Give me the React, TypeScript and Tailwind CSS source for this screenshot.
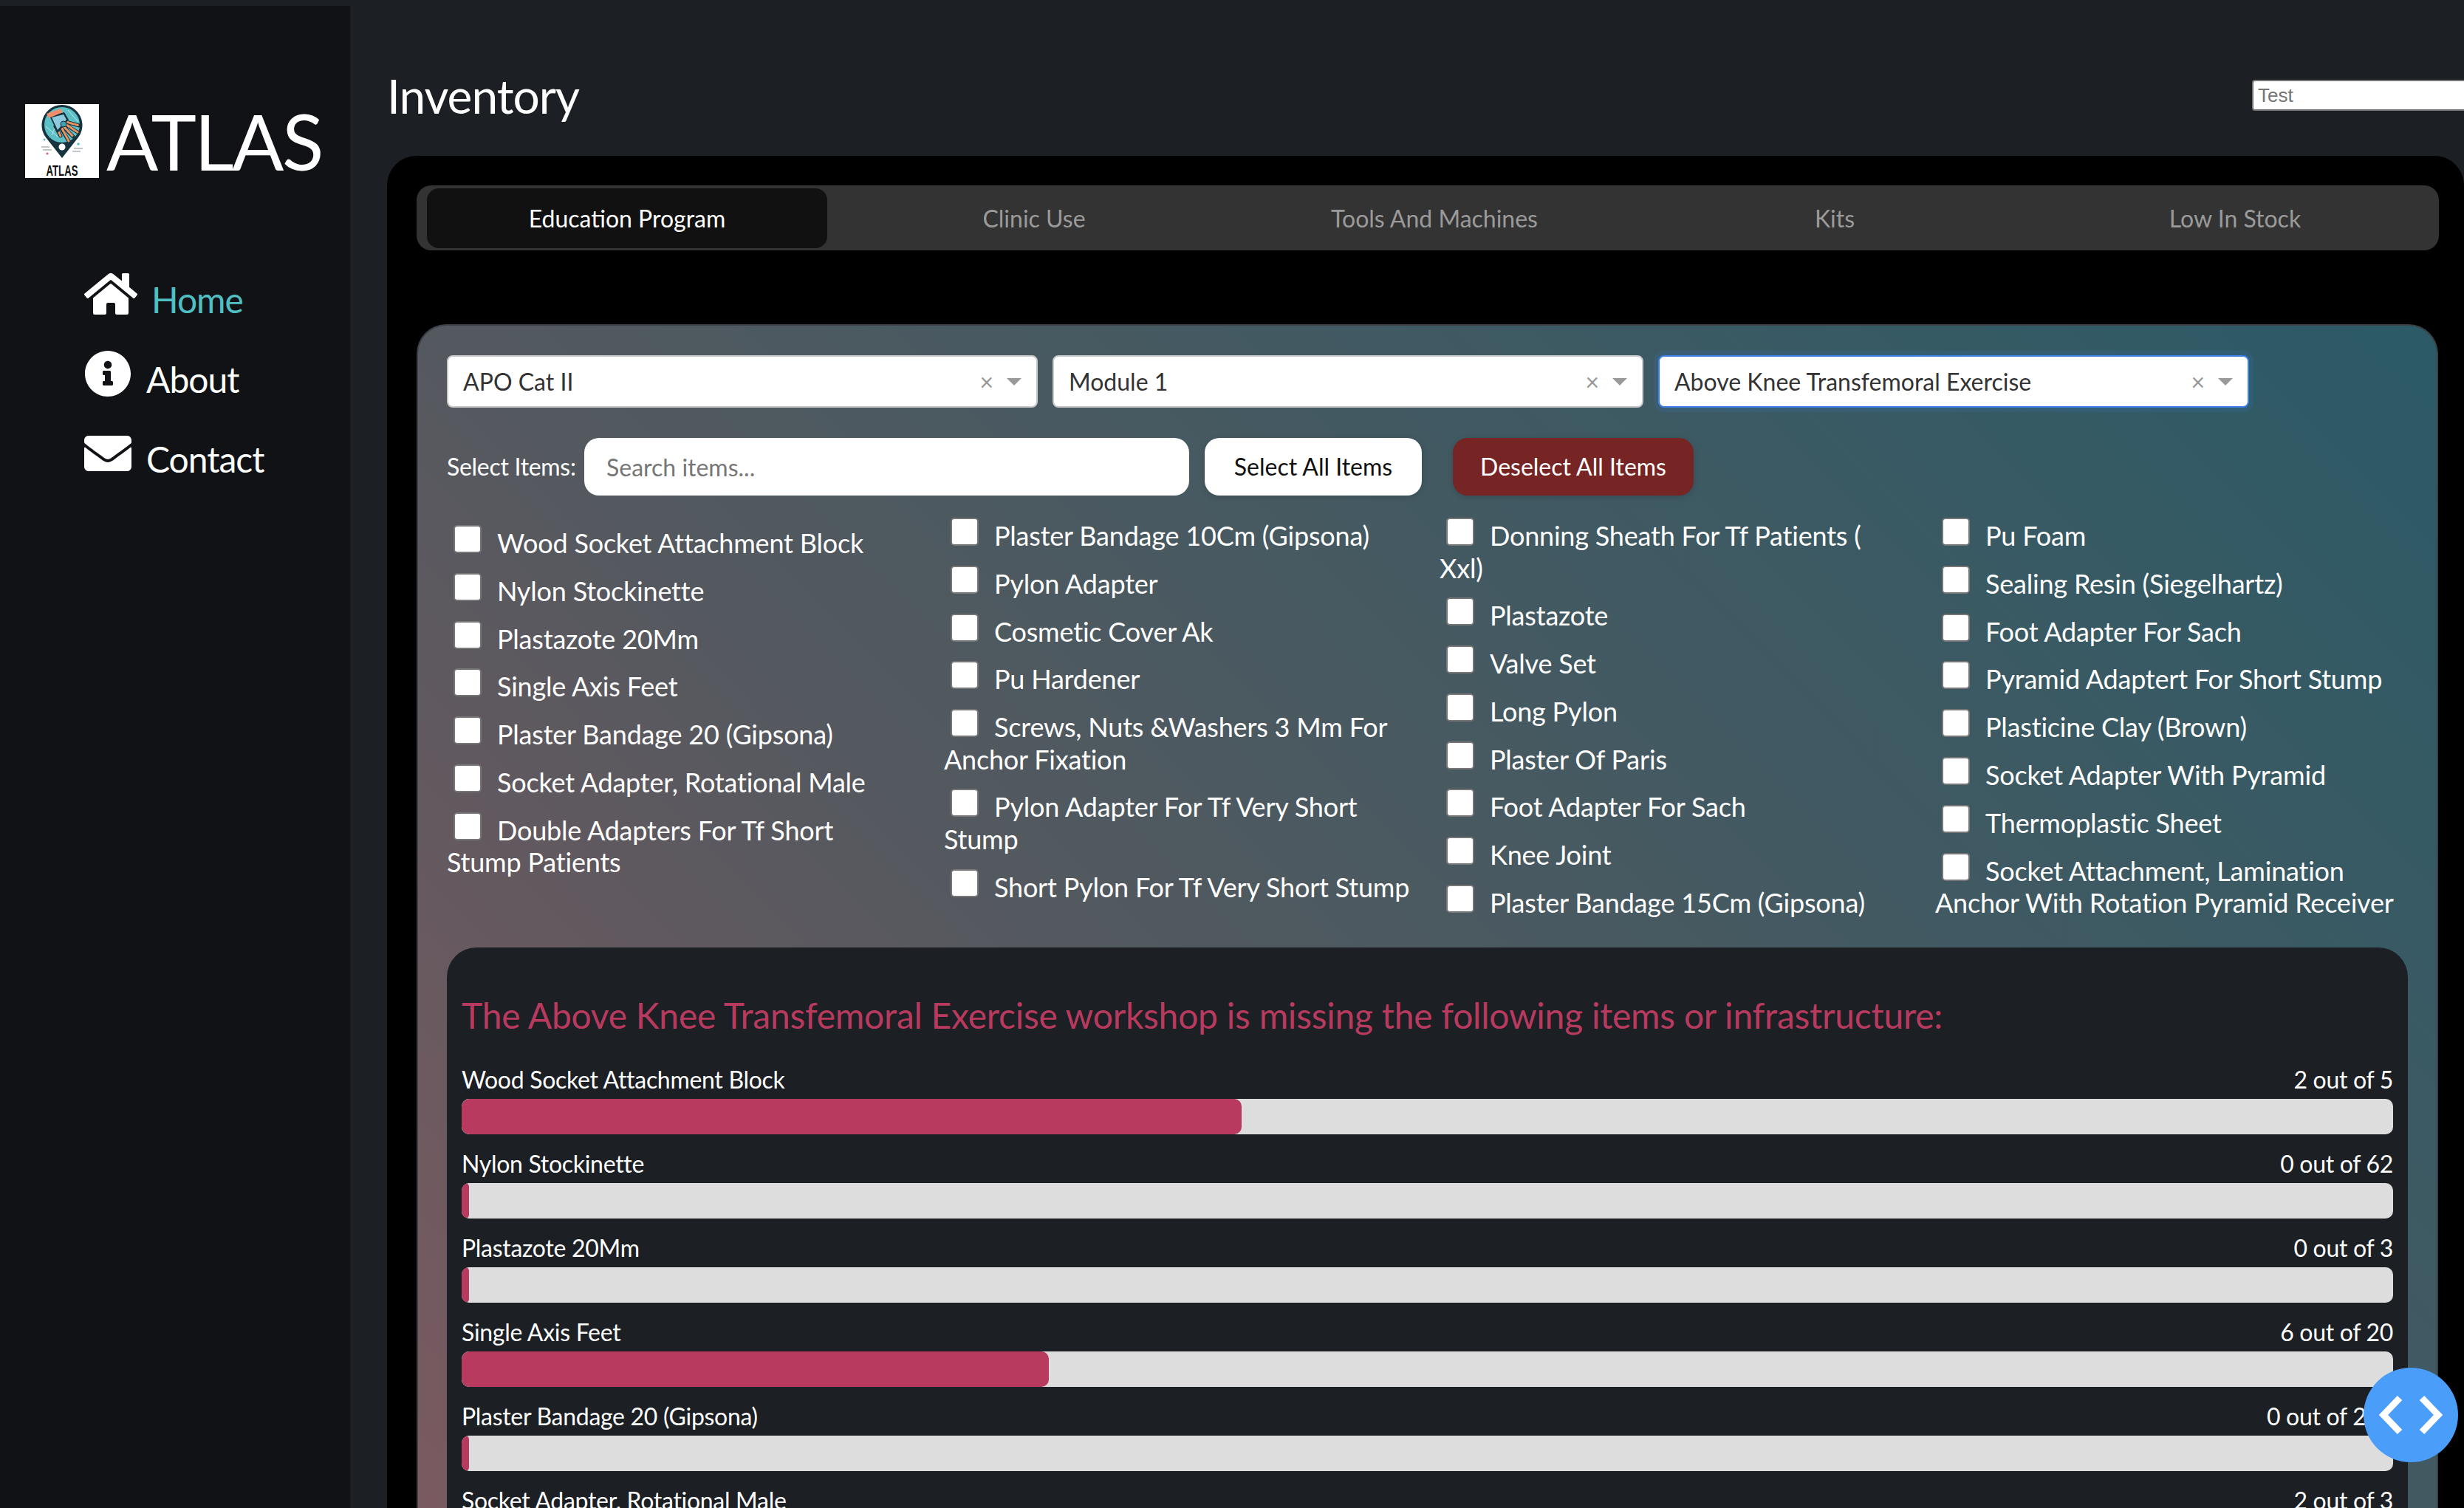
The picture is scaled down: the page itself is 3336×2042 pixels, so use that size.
import { FaEnvelope, FaHome, FaInfoCircle } from 'react-icons/fa'

const TABS = ['Education Program', 'Clinic Use', 'Tools And Machines', 'Kits', 'Low In Stock']

const SELECTS = ['APO Cat II', 'Module 1', 'Above Knee Transfemoral Exercise']

const COLUMNS = [
  [
    'Wood Socket Attachment Block',
    'Nylon Stockinette',
    'Plastazote 20Mm',
    'Single Axis Feet',
    'Plaster Bandage 20 (Gipsona)',
    'Socket Adapter, Rotational Male',
    'Double Adapters For Tf Short\nStump Patients',
  ],
  [
    'Plaster Bandage 10Cm (Gipsona)',
    'Pylon Adapter',
    'Cosmetic Cover Ak',
    'Pu Hardener',
    'Screws, Nuts &Washers 3 Mm For\nAnchor Fixation',
    'Pylon Adapter For Tf Very Short\nStump',
    'Short Pylon For Tf Very Short Stump',
  ],
  [
    'Donning Sheath For Tf Patients (\nXxl)',
    'Plastazote',
    'Valve Set',
    'Long Pylon',
    'Plaster Of Paris',
    'Foot Adapter For Sach',
    'Knee Joint',
    'Plaster Bandage 15Cm (Gipsona)',
  ],
  [
    'Pu Foam',
    'Sealing Resin (Siegelhartz)',
    'Foot Adapter For Sach',
    'Pyramid Adaptert For Short Stump',
    'Plasticine Clay (Brown)',
    'Socket Adapter With Pyramid',
    'Thermoplastic Sheet',
    'Socket Attachment, Lamination\nAnchor With Rotation Pyramid Receiver',
  ],
]

const STOCK = [
  { name: 'Wood Socket Attachment Block', have: 2, need: 5 },
  { name: 'Nylon Stockinette', have: 0, need: 62 },
  { name: 'Plastazote 20Mm', have: 0, need: 3 },
  { name: 'Single Axis Feet', have: 6, need: 20 },
  { name: 'Plaster Bandage 20 (Gipsona)', have: 0, need: 200 },
  { name: 'Socket Adapter, Rotational Male', have: 2, need: 3 },
]

function Logo() {
  return (
    <svg viewBox="0 0 100 100" className="h-[100px] w-[100px] shrink-0 bg-white">
      {/* pin */}
      <path d="M50 73 L28 45 A27.5 27.5 0 1 1 72 45 Z" fill="#16333f" />
      <circle cx="50" cy="28" r="24" fill="#5cc0c6" />
      <g stroke="#e8f6f6" strokeWidth="0.7" fill="none">
        <path d="M28 30 L44 44" />
        <path d="M36 42 L42 28" />
        <path d="M58 8 L72 24" />
      </g>
      {/* fingers */}
      <g stroke="#16333f" strokeWidth="5" strokeLinecap="round">
        <path d="M55 24 L73 29" />
        <path d="M55 28 L71 38" />
        <path d="M52 31 L65 44" />
        <path d="M49 33 L59 50" />
        <path d="M41 30 L48 43" />
      </g>
      <g stroke="#ea9463" strokeWidth="3" strokeLinecap="round" strokeDasharray="4 2">
        <path d="M56 24 L73 29" />
        <path d="M56 28 L71 38" />
        <path d="M53 31 L65 44" />
        <path d="M50 33 L59 50" />
        <path d="M42 31 L48 43" />
      </g>
      {/* back of the hand */}
      <path d="M33 16 L53 11 L59 21 L44 39 Z" fill="#16333f" />
      <path d="M36 18 L52 14 L56 21 L44 35 Z" fill="#8fc9de" />
      <path d="M29 13 L48 6 L51 11 L32 19 Z" fill="#ef8d6d" />
      <circle cx="52" cy="27" r="4" fill="#3f9fb0" stroke="#16333f" strokeWidth="1" />
      <circle cx="50" cy="58" r="4.5" fill="#fff" />
      <g stroke="#9aa3a8" strokeWidth="1.2">
        <path d="M22 58 H33" />
        <path d="M24 62 H36" />
        <path d="M66 60 H78" />
        <path d="M64 64 H75" />
      </g>
      <circle cx="26" cy="48" r="1.5" fill="#5cc0c6" />
      <circle cx="72" cy="54" r="1.8" fill="#5cc0c6" />
      <circle cx="30" cy="67" r="1.5" fill="#e2566c" />
      <text
        x="50"
        y="97"
        textAnchor="middle"
        fontFamily="'Liberation Sans', sans-serif"
        fontWeight="700"
        fontSize="20"
        textLength="43"
        lengthAdjust="spacingAndGlyphs"
        fill="#111"
      >
        ATLAS
      </text>
    </svg>
  )
}

function Sidebar() {
  return (
    <aside className="mt-[8px] h-[2034px] w-[474px] shrink-0 bg-[#101215] pl-[34px] pt-[133px]">
      <div className="flex items-center gap-[10px]">
        <Logo />
        <span className="text-[104px] leading-[100px] tracking-[-2.6px] text-white">ATLAS</span>
      </div>
      <nav className="ml-[80px] mt-[125px] flex flex-col gap-[37px] text-[48px] leading-[62px] tracking-[-1px] text-white">
        <a className="flex items-start gap-[19px]">
          <FaHome className="h-[64px] w-[72px]" />
          <span className="pt-[9px] text-[#4fbfc4]">Home</span>
        </a>
        <a className="flex items-start gap-[20px]">
          <FaInfoCircle className="size-[64px]" />
          <span className="pt-[9px]">About</span>
        </a>
        <a className="flex items-start gap-[20px]">
          <FaEnvelope className="size-[64px]" />
          <span className="pt-[9px]">Contact</span>
        </a>
      </nav>
    </aside>
  )
}

function SelectBox({ label, focused }: { label: string; focused: boolean }) {
  return (
    <div
      className={
        focused
          ? 'flex h-[71px] w-[800px] items-center rounded-[8px] border-2 border-[#3b7ee6] bg-white pl-[20px] pr-[20px] shadow-[0_0_0_6px_rgba(59,126,230,0.12)]'
          : 'flex h-[71px] w-[800px] items-center rounded-[8px] border-2 border-[#c8c8c8] bg-white pl-[20px] pr-[20px]'
      }
    >
      <span className="flex-1 text-[32px] text-[#333]">{label}</span>
      <span className="mr-[18px] text-[32px] leading-none text-[#999]">×</span>
      <span className="h-0 w-0 border-x-[10px] border-t-[10px] border-x-transparent border-t-[#999]" />
    </div>
  )
}

function ItemColumn({ items, first }: { items: string[]; first: boolean }) {
  return (
    <div className={first ? 'w-[673px] shrink-0 pt-[10px]' : 'w-[671px] shrink-0'}>
      {items.map((item) => (
        <label key={item} className="mb-[18.3px] block whitespace-pre text-[36px] leading-[43.5px] tracking-[-0.2px] text-white">
          <input
            type="checkbox"
            className="ml-[9px] mr-[21px] inline-block h-[38px] w-[38px] appearance-none rounded-[5px] border-2 border-[#767676] bg-white"
          />
          {item}
        </label>
      ))}
    </div>
  )
}

function StockRow({ name, have, need }: { name: string; have: number; need: number }) {
  return (
    <div className="mb-[10px]">
      <div className="flex h-[56px] items-end justify-between pb-[6px] text-[32px] leading-[40px] tracking-[-0.3px] text-white">
        <span>{name}</span>
        <span>
          {have} out of {need}
        </span>
      </div>
      <div className="h-[48px] overflow-hidden rounded-[10px] bg-[#dddddd]">
        <div
          className="h-full rounded-[10px] bg-[#b83a5e]"
          style={{ width: `calc(${(have / need) * 100}% + 10px)` }}
        />
      </div>
    </div>
  )
}

export default function App() {
  return (
    <div className="relative flex h-[2042px] w-[3336px] overflow-hidden bg-[#1c1f24] font-['Lato','Noto_Sans',sans-serif] font-normal">
      <Sidebar />
      <main className="flex min-w-0 flex-1 flex-col pl-[50px]">
        <header className="flex h-[211px] shrink-0 items-start">
          <h1 className="mt-[90px] flex-1 text-[64px] leading-[80px] tracking-[-1px] text-white">Inventory</h1>
          <input
            placeholder="Test"
            className="-mr-[33px] mt-[108px] h-[42px] w-[320px] shrink-0 rounded-[4px] border-2 border-[#767676] bg-white pl-[6px] font-['Liberation_Sans',sans-serif] text-[26px] font-normal placeholder:text-[#757575]"
          />
        </header>

        <section className="flex min-h-0 flex-1 flex-col rounded-t-[40px] bg-black pl-[40px] pr-[34px] pt-[40px]">
          <div className="flex h-[88px] shrink-0 items-center rounded-[20px] bg-[#333333] pl-[14px]">
            {TABS.map((tab, i) => (
              <div
                key={tab}
                className={
                  i === 0
                    ? 'mr-[9px] flex h-[81px] w-[542px] items-center justify-center rounded-[16px] bg-[#111111] pt-[1px] text-[32px] text-white'
                    : 'flex h-[81px] w-[542px] items-center justify-center pt-[2px] text-[32px] text-[#9a9a9a]'
                }
              >
                {tab}
              </div>
            ))}
          </div>

          <div className="mr-[1px] mt-[100px] min-h-0 flex-1 overflow-hidden rounded-t-[40px] border-2 border-b-0 border-[#3a4046] bg-[linear-gradient(45deg,#7a5a60,#54595f_37%,#2b5a66)] px-[39px] pt-[40px]">
            <div className="flex gap-[20px]">
              {SELECTS.map((label, i) => (
                <SelectBox key={label} label={label} focused={i === 2} />
              ))}
            </div>

            <div className="mt-[41px] flex h-[78px] items-center">
              <span className="w-[186px] text-[32px] tracking-[-0.3px] text-white">Select Items:</span>
              <input
                placeholder="Search items..."
                className="h-full w-[819px] rounded-[20px] bg-white px-[30px] text-[32px] placeholder:text-[#777]"
              />
              <button className="ml-[21px] h-full w-[294px] rounded-[20px] bg-white text-[32px] text-[#111] shadow-[0_2px_8px_rgba(0,0,0,0.15)]">
                Select All Items
              </button>
              <button className="ml-[42px] h-full w-[326px] rounded-[20px] bg-[#762524] text-[32px] text-white shadow-[0_2px_8px_rgba(0,0,0,0.15)]">
                Deselect All Items
              </button>
            </div>

            <div className="flex h-[612px] pt-[30px]">
              {COLUMNS.map((items, i) => (
                <ItemColumn key={i} items={items} first={i === 0} />
              ))}
            </div>

            <div className="rounded-t-[40px] bg-[#1c1f24] px-[20px] pt-[62px]">
              <h2 className="mb-[27px] text-[48px] leading-[60px] tracking-[-0.25px] text-[#b83a5e]">
                The Above Knee Transfemoral Exercise workshop is missing the following items or infrastructure:
              </h2>
              {STOCK.map((row) => (
                <StockRow key={row.name} {...row} />
              ))}
            </div>
          </div>
        </section>
      </main>

      <button className="absolute left-[3200px] top-[1852px] flex h-[128px] w-[128px] items-center justify-center rounded-full bg-[#4a9df8]">
        <svg viewBox="0 0 128 128" className="h-[128px] w-[128px]" fill="none" stroke="#fff" strokeWidth="9">
          <path d="M49 41 L27 64 L49 87" />
          <path d="M79 41 L101 64 L79 87" />
        </svg>
      </button>
    </div>
  )
}
